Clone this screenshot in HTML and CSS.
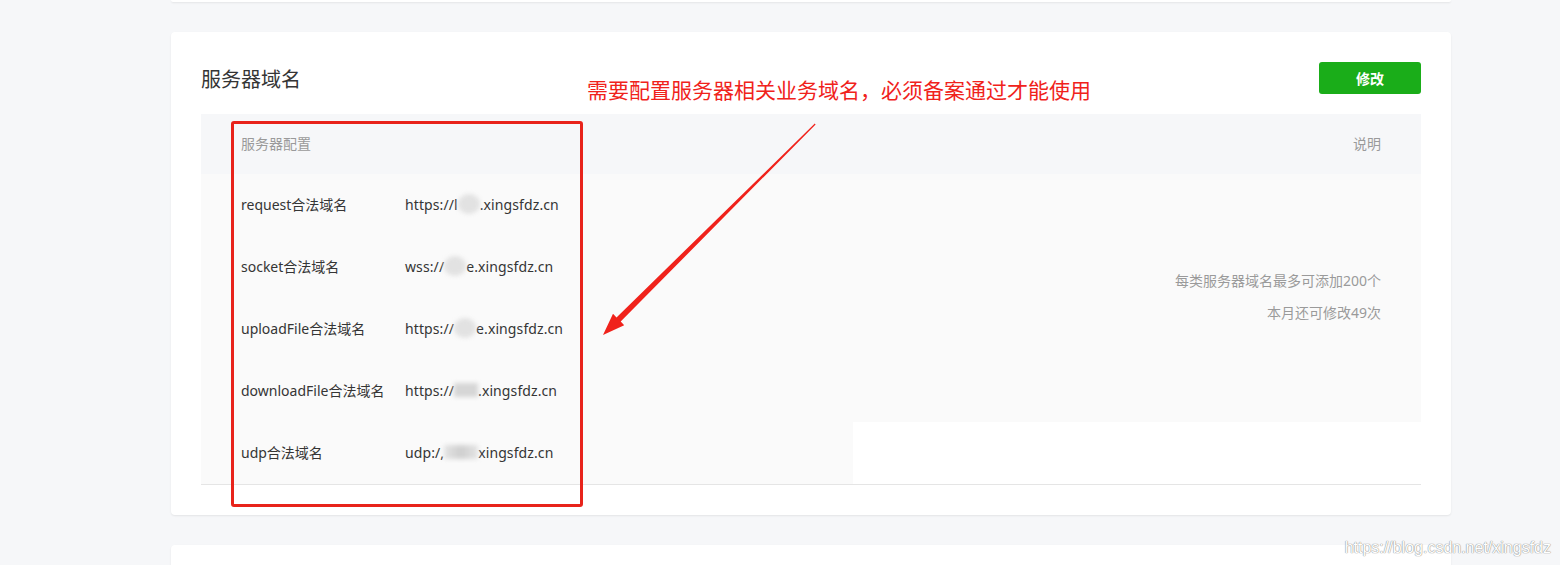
FILE: index.html
```html
<!DOCTYPE html>
<html lang="zh-CN">
<head>
<meta charset="utf-8">
<title>服务器域名</title>
<link rel="stylesheet" href="styles.css">
</head>
<body>
<div class="page">
  <div class="card card-top"></div>
  <div class="card card-main">
    <div class="card-head">
      <h2 class="title">服务器域名</h2>
      <button class="btn-primary">修改</button>
    </div>
    <div class="table">
      <div class="th th-left">服务器配置</div>
      <div class="th th-right">说明</div>

      <div class="td label">request合法域名</div>
      <div class="td value">https://l<span class="blob round"></span>.xingsfdz.cn</div>
      <div class="td desc">
        <p>每类服务器域名最多可添加200个</p>
        <p>本月还可修改49次</p>
      </div>

      <div class="td label">socket合法域名</div>
      <div class="td value">wss://<span class="blob round"></span>e.xingsfdz.cn</div>

      <div class="td label">uploadFile合法域名</div>
      <div class="td value">https://<span class="blob round"></span>e.xingsfdz.cn</div>

      <div class="td label">downloadFile合法域名</div>
      <div class="td value">https://<span class="blob"></span>.xingsfdz.cn</div>

      <div class="td label">udp合法域名</div>
      <div class="td value">udp:/,<span class="blob wide"></span>xingsfdz.cn</div>
      <div class="td empty"></div>
    </div>

    <div class="annotation">
      <div class="note">需要配置服务器相关业务域名，必须备案通过才能使用</div>
      <div class="frame"></div>
      <svg class="arrow" width="1280" height="483" viewBox="0 0 1280 483">
        <polygon fill="#f0221b" points="644.6,92.4 449.7,289.6 453.2,293.2 432,303 442.0,281.8 445.5,285.4 643.8,91.6"/>
      </svg>
    </div>
  </div>
  <div class="card card-bottom"></div>
</div>
<div class="watermark">https://blog.csdn.net/xingsfdz</div>
</body>
</html>
```

FILE: styles.css
```css
html, body {
  margin: 0;
  padding: 0;
}
body {
  background: #f6f7f9;
  font-family: "Noto Sans", "Noto Sans CJK SC", sans-serif;
  color: #353535;
  width: 1560px;
  height: 565px;
  overflow: hidden;
  position: relative;
}
.page {
  width: 1280px;
  margin-left: 171px;
  display: flex;
  flex-direction: column;
  gap: 30px;
}
.card {
  background: #fff;
  border-radius: 4px;
  box-shadow: 0 1px 2px rgba(0,0,0,0.08);
}
.card-top {
  height: 2px;
  border-radius: 0 0 4px 4px;
}
.card-main {
  height: 483px;
  box-sizing: border-box;
  padding: 30px 30px 0 30px;
  position: relative;
}
.card-bottom {
  height: 40px;
}
.card-head {
  display: flex;
  align-items: center;
  justify-content: space-between;
  height: 32px;
  margin-bottom: 20px;
}
.title {
  margin: 0;
  font-weight: normal;
  font-size: 20px;
  color: #353535;
  font-family: "Noto Sans CJK SC", sans-serif;
}
.btn-primary {
  width: 102px;
  height: 32px;
  border: 0;
  border-radius: 3px;
  background: #1aad19;
  color: #fff;
  font-family: "Noto Sans CJK SC", sans-serif;
  font-size: 14px;
  font-weight: bold;
  padding: 0;
}
.table {
  display: grid;
  grid-template-columns: 204px 448px 1fr;
  grid-template-rows: 60px repeat(5, 62px);
  border-bottom: 1px solid #e5e5e5;
}
.th {
  background: #f6f7f9;
  color: #9a9a9a;
  font-size: 14px;
  display: flex;
  align-items: center;
  font-family: "Noto Sans CJK SC", sans-serif;
  padding-bottom: 2px;
}
.th-left {
  grid-column: 1 / 3;
  padding-left: 40px;
}
.th-right {
  justify-content: flex-end;
  padding-right: 40px;
}
.td {
  background: #fafafa;
  display: flex;
  align-items: center;
  font-size: 14px;
  color: #353535;
  white-space: nowrap;
  padding-bottom: 2px;
}
.label {
  padding-left: 40px;
}
.value {
  letter-spacing: 0.1px;
}
.desc {
  grid-column: 3;
  grid-row: 2 / span 4;
  flex-direction: column;
  align-items: flex-end;
  justify-content: center;
  padding-right: 40px;
  gap: 12px;
}
.desc p {
  margin: 0;
  font-size: 14px;
  color: #9a9a9a;
  line-height: 20px;
}
.empty {
  background: #fff;
}
.blob {
  display: inline-block;
  width: 24px;
  height: 14px;
  background: #d6d6d6;
  filter: blur(2px);
  vertical-align: middle;
}
.blob.round {
  width: 22px;
  height: 20px;
  border-radius: 50%;
  background: #e2e2e2;
}
.blob.wide {
  width: 34px;
  background: linear-gradient(90deg, #e4e4e4, #cfcfcf, #e4e4e4);
}
.annotation {
  position: absolute;
  inset: 0;
  pointer-events: none;
}
.note {
  position: absolute;
  left: 416px;
  top: 42px;
  color: #f0221b;
  font-size: 21px;
  font-family: "Noto Sans CJK SC", sans-serif;
  white-space: nowrap;
}
.frame {
  position: absolute;
  left: 60px;
  top: 89px;
  width: 346px;
  height: 380px;
  border: 3px solid #e8231b;
  border-radius: 3px;
}
.arrow {
  position: absolute;
  left: 0;
  top: 0;
}
.watermark {
  position: absolute;
  right: 9px;
  bottom: 8px;
  font-family: "Liberation Sans Narrow", "Liberation Sans", sans-serif;
  font-size: 16px;
  color: #fff;
  text-shadow: 0 0 1px #888, 0 0 1px #888;
}
```
